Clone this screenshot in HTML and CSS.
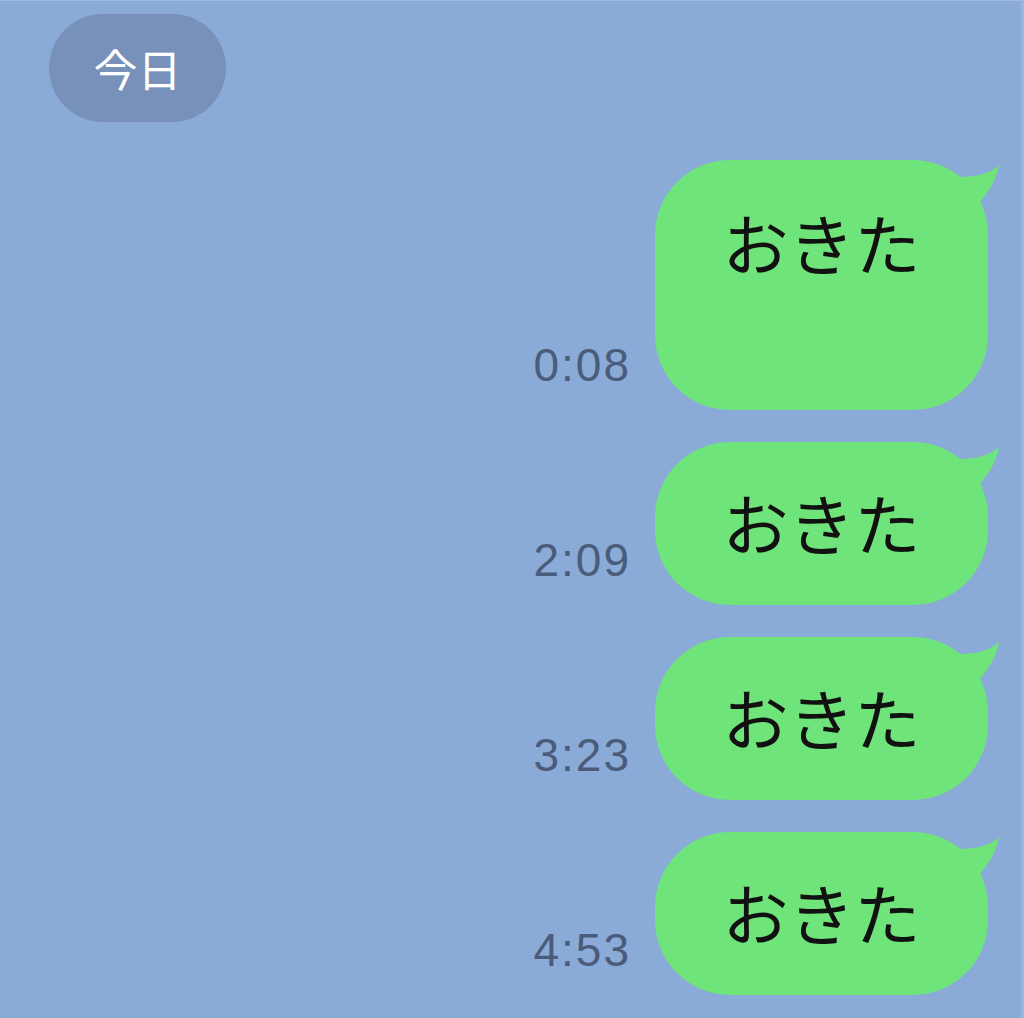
FILE: index.html
```html
<!DOCTYPE html>
<html lang="ja">
<head>
<meta charset="utf-8">
<title>LINE</title>
<link rel="stylesheet" href="styles.css">
</head>
<body>
<div class="chat">
  <div class="date-row"><span class="date">今日</span></div>

  <div class="msg">
    <span class="time">0:08</span>
    <div class="bubble bubble-tall">おきた
      <svg class="tail" viewBox="0 0 62 60" aria-hidden="true"><path d="M0 60 L0 14 C8 16 14 17 18 17 C34 17 50 14 59 5 C57 16 52 28 40 42 L40 60 Z"/></svg>
    </div>
  </div>

  <div class="msg">
    <span class="time">2:09</span>
    <div class="bubble">おきた
      <svg class="tail" viewBox="0 0 62 60" aria-hidden="true"><path d="M0 60 L0 14 C8 16 14 17 18 17 C34 17 50 14 59 5 C57 16 52 28 40 42 L40 60 Z"/></svg>
    </div>
  </div>

  <div class="msg">
    <span class="time">3:23</span>
    <div class="bubble">おきた
      <svg class="tail" viewBox="0 0 62 60" aria-hidden="true"><path d="M0 60 L0 14 C8 16 14 17 18 17 C34 17 50 14 59 5 C57 16 52 28 40 42 L40 60 Z"/></svg>
    </div>
  </div>

  <div class="msg">
    <span class="time">4:53</span>
    <div class="bubble">おきた
      <svg class="tail" viewBox="0 0 62 60" aria-hidden="true"><path d="M0 60 L0 14 C8 16 14 17 18 17 C34 17 50 14 59 5 C57 16 52 28 40 42 L40 60 Z"/></svg>
    </div>
  </div>
</div>
</body>
</html>
```

FILE: styles.css
```css
html, body {
  margin: 0;
  padding: 0;
  background: #8aaad8;
}

.chat {
  width: 1024px;
  height: 1018px;
  box-sizing: border-box;
  padding-top: 13px;
  border-top: 1px solid #a2b9e0;
  border-right: 3px solid #9db5de;
  display: flex;
  flex-direction: column;
  gap: 32px;
  overflow: hidden;
}

.date-row {
  display: flex;
  padding-left: 49px;
  margin-bottom: 6px;
}

.date {
  display: inline-flex;
  align-items: center;
  justify-content: center;
  width: 177px;
  height: 108px;
  border-radius: 54px;
  background: #7791bb;
  color: #ffffff;
  font-family: "Noto Sans CJK JP", "Noto Sans", sans-serif;
  font-size: 44px;
  line-height: 1;
}

.msg {
  display: flex;
  justify-content: flex-end;
  align-items: flex-end;
  gap: 24px;
  padding-right: 33px;
}

.time {
  font-family: "Liberation Sans", Arial, sans-serif;
  font-size: 46px;
  line-height: 1;
  letter-spacing: 2px;
  color: #4b5c7b;
  margin-bottom: 22px;
}

.bubble {
  position: relative;
  box-sizing: border-box;
  width: 333px;
  height: 163px;
  padding-top: 46px;
  border-radius: 75px;
  background: #6ee47a;
  color: #111111;
  font-family: "Noto Sans CJK JP", sans-serif;
  font-size: 66px;
  line-height: 66px;
  text-align: center;
}

.bubble-tall {
  height: 250px;
  padding-top: 48px;
}

.tail {
  position: absolute;
  top: 0;
  right: -14px;
  width: 62px;
  height: 60px;
  fill: #6ee47a;
}
```
